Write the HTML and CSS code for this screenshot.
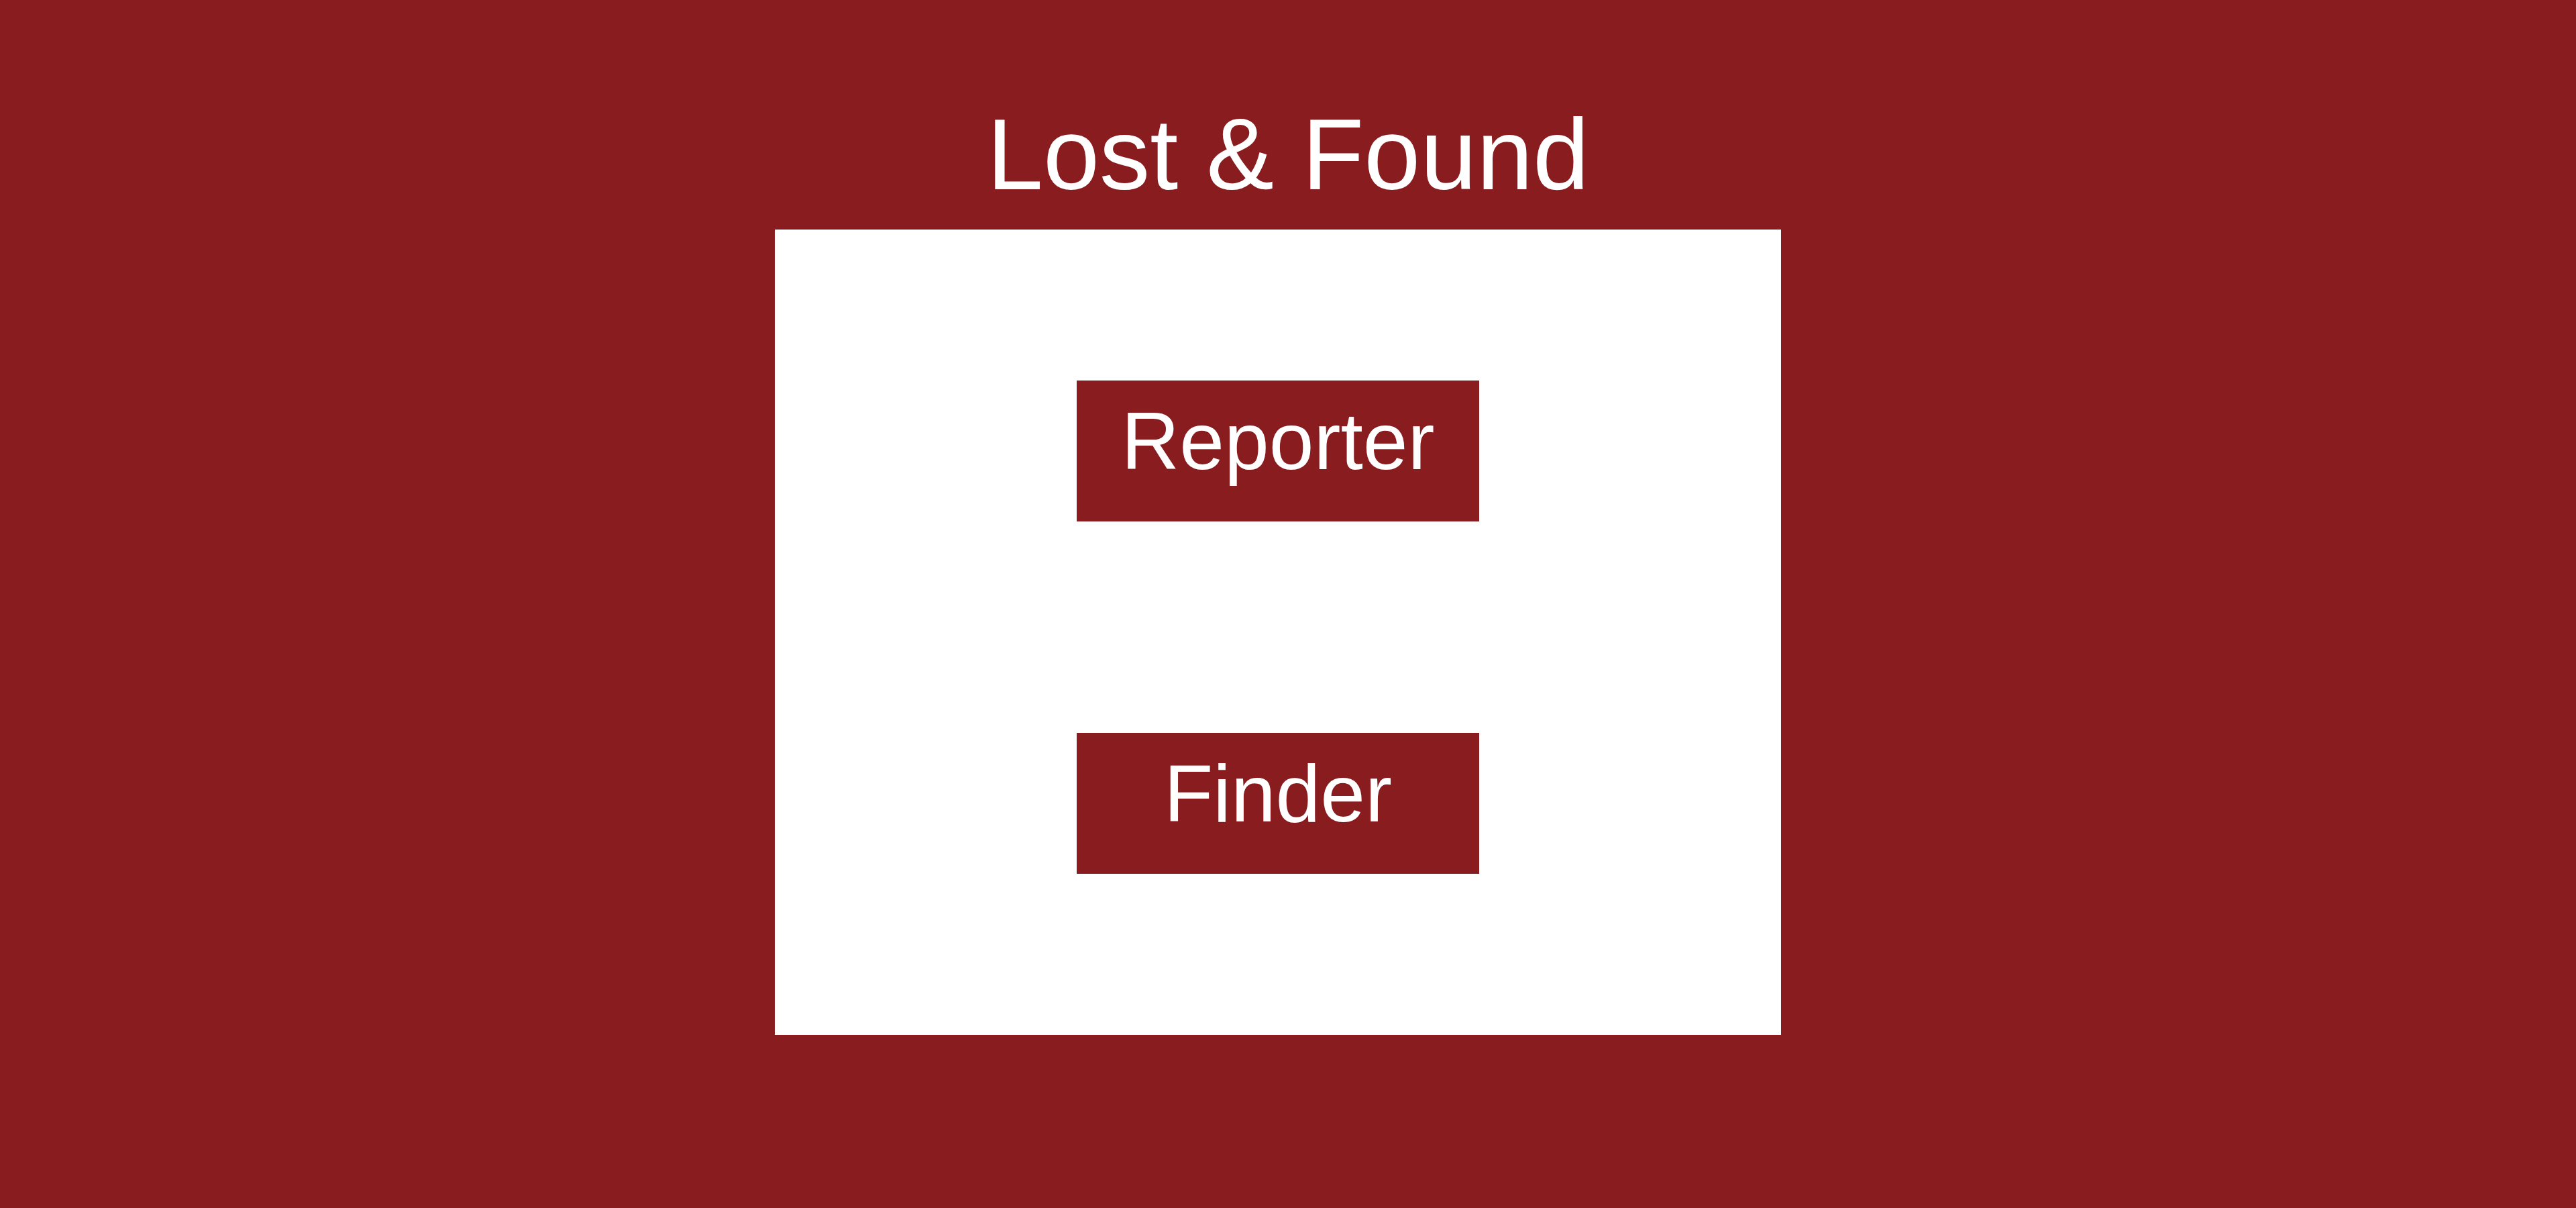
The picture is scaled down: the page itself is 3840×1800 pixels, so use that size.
FILE: index.html
```html
<!DOCTYPE html>
<html lang="en">
<head>
<meta charset="utf-8">
<title>Lost &amp; Found</title>
<link rel="stylesheet" href="styles.css">
</head>
<body>
<h1 class="title">Lost &amp; Found</h1>
<main class="panel">
  <button class="role-btn" type="button">Reporter</button>
  <button class="role-btn" type="button">Finder</button>
</main>
</body>
</html>
```
FILE: styles.css
```css
html, body {
  margin: 0;
  padding: 0;
}
body {
  background: #891c1e;
  font-family: "Liberation Sans", Arial, sans-serif;
  color: #ffffff;
  width: 3840px;
  height: 1800px;
  overflow: hidden;
}
.title {
  margin: 0;
  padding-top: 143px;
  font-size: 151px;
  line-height: 174px;
  font-weight: normal;
  text-align: center;
  margin-bottom: 25px;
}
.panel {
  box-sizing: border-box;
  width: 1500px;
  height: 1200px;
  margin-left: 1155px;
  background: #ffffff;
  display: flex;
  flex-direction: column;
  align-items: center;
  padding-top: 225px;
  gap: 315px;
}
.role-btn {
  box-sizing: border-box;
  width: 600px;
  height: 210px;
  background: #891c1e;
  color: #ffffff;
  border: none;
  border-radius: 0;
  font-family: "Liberation Sans", Arial, sans-serif;
  font-size: 120px;
  line-height: 134px;
  padding: 23px 0 53px;
  margin: 0;
  text-align: center;
}
```
